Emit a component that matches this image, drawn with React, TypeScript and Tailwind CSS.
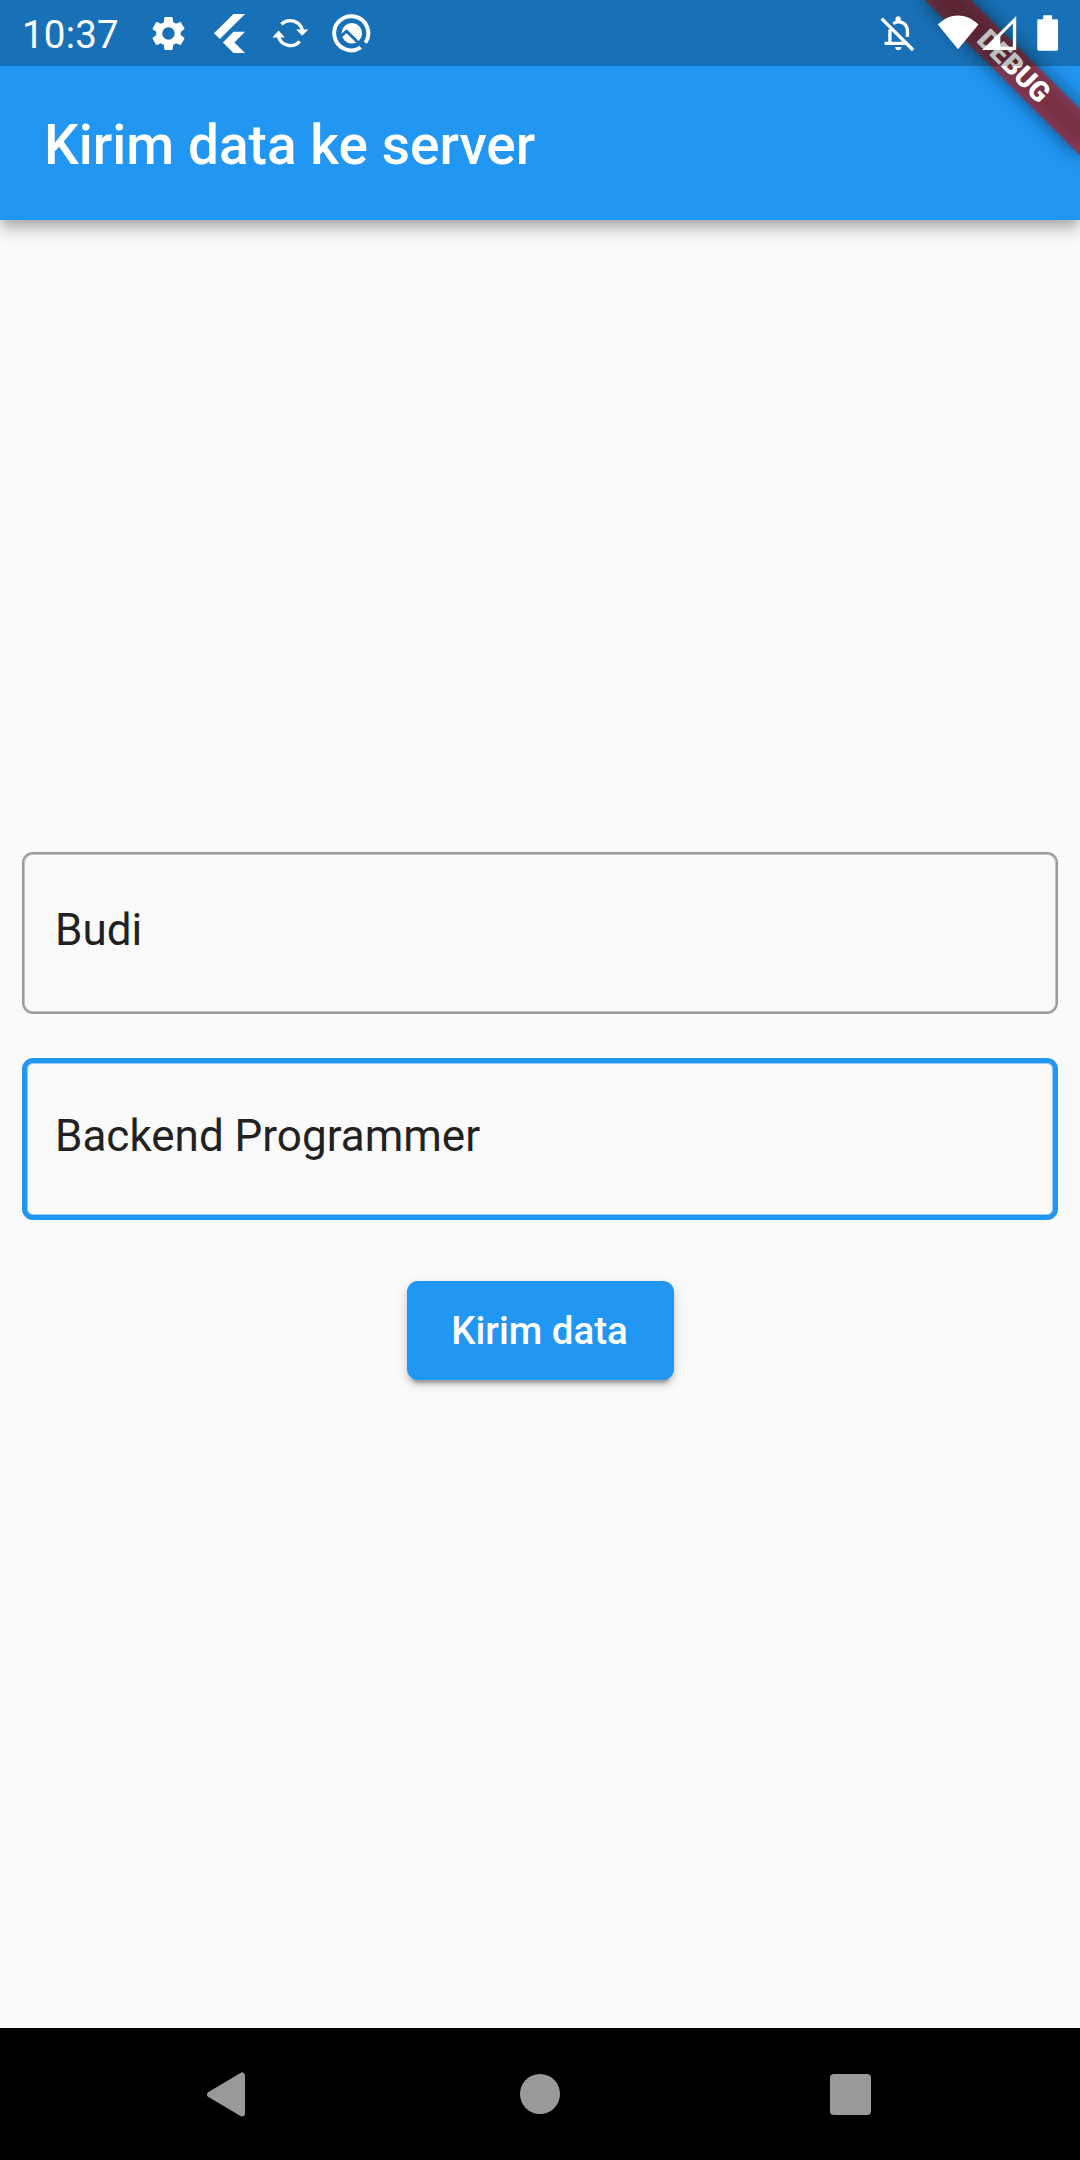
import { MdSettings } from "react-icons/md";

function Field({ value, focused }: { value: string; focused?: boolean }) {
  return (
    <div
      className={
        focused
          ? "flex h-[162px] items-center rounded-[11px] border-[5px] border-[#2196f3] pl-[28px] shadow-[inset_0_0_0_1px_rgba(33,150,243,0.45)]"
          : "flex h-[162px] items-center rounded-[11px] border-[2px] border-[#9b9b9b] pl-[31px] shadow-[inset_0_0_0_1px_rgba(155,155,155,0.6)]"
      }
    >
      <span className="-mt-[6px] text-[44px] leading-[52px] text-[#212121]">{value}</span>
    </div>
  );
}

function StatusBar() {
  return (
    <div className="relative z-20 flex h-[66px] items-center bg-black/25 text-white">
      <span className="w-[125px] pt-[3px] pl-[22px] text-[38.5px] leading-[44px] tracking-[0.2px]">10:37</span>
      <MdSettings className="ml-[23px] size-[41px]" />
      <svg className="ml-[20px] size-[41px]" viewBox="26 38 124 124" fill="currentColor">
        <path d="M100 41H135L59 117L41 99ZM100 95H135L103 127L135 159H100L68 127Z" />
      </svg>
      <svg className="ml-[20px] size-[41px]" viewBox="209 38 124 124" fill="currentColor">
        <path d="M243.500 72A38 38 0 0 1 307 90M234 107A38 38 0 0 0 299 124" fill="none" stroke="currentColor" strokeWidth="10" />
        <path d="M288 88H325L306.500 107ZM216 112H254L235 91Z" />
      </svg>
      <svg className="ml-[20px] size-[41px]" viewBox="392 38 124 124" fill="currentColor">
        <path d="M482 142A51.500 51.500 0 1 1 496 128" fill="none" stroke="currentColor" strokeWidth="12" />
        <circle cx="455" cy="99" r="31" />
        <path d="M422 108L439 93L488 141" fill="none" stroke="#1970b6" strokeWidth="9" />
      </svg>
      <svg className="ml-auto h-[41px] w-[41px]" viewBox="52 38 124 124" fill="none" stroke="currentColor" strokeWidth="10">
        <path d="M63 55L158 150M72 130H138M88 130V88M98 70C120 58 140 70 141 92V110" />
        <path d="M104 141H123A9 9 0 0 1 104 141ZM105 63V56A8 8 0 0 1 121 56V63Z" fill="currentColor" stroke="none" />
      </svg>
      <svg className="ml-[16px] h-[41px] w-[46px]" viewBox="226 38 138 124" fill="currentColor">
        <path d="M295 148L234 73C270 36 320 36 357 73Z" />
      </svg>
      <svg className="h-[41px] w-[38px]" viewBox="364 38 114 124" fill="currentColor">
        <path fillRule="evenodd" d="M367 150L470 47V150ZM422 140H460V70L422 108Z" />
      </svg>
      <svg className="mr-[16px] ml-[12px] h-[41px] w-[33px]" viewBox="512 38 100 124" fill="currentColor">
        <path d="M549 45H576V57H590Q594 57 594 61V148Q594 152 590 152H535Q531 152 531 148V61Q531 57 535 57H549Z" />
      </svg>
    </div>
  );
}

export default function App() {
  return (
    <div className="relative flex h-[2160px] w-[1080px] flex-col overflow-hidden bg-[#fafafa] font-['Roboto',sans-serif]">
      <header className="relative h-[220px] bg-[#2196f3] shadow-[0_5px_11px_-3px_rgba(0,0,0,0.2),0_11px_14px_0_rgba(0,0,0,0.14),0_3px_27px_0_rgba(0,0,0,0.12)]">
        <StatusBar />
        <h1 className="flex h-[154px] items-center pt-[3px] pl-[44px] text-[55px] leading-[64px] font-medium tracking-[0.02px] text-white">
          Kirim data ke server
        </h1>
        <div className="pointer-events-none absolute top-0 right-0 z-10 size-[220px] overflow-hidden">
          <div className="absolute top-[77px] left-[110px] h-[33px] w-[220px] origin-[110px_-77px] rotate-45">
            <div className="absolute inset-0 bg-black/50 blur-[10px]" />
            <div className="relative flex h-full items-center justify-center bg-[#b71c1c]/[0.627] text-[28px] leading-[28px] font-black text-white">
              DEBUG
            </div>
          </div>
        </div>
      </header>

      <main className="flex flex-1 flex-col justify-center px-[22px] pb-[16px]">
        <Field value="Budi" />
        <div className="mt-[44px]">
          <Field value="Backend Programmer" focused />
        </div>
        <button className="mt-[61px] flex h-[99px] w-[267px] items-center justify-center self-center rounded-[11px] bg-[#2196f3] pr-px text-[38.5px] font-medium text-white shadow-[0_8px_3px_-5px_rgba(0,0,0,0.2),0_5px_5px_0_rgba(0,0,0,0.14),0_3px_14px_0_rgba(0,0,0,0.12)]">
          Kirim data
        </button>
      </main>

      <nav className="flex h-[132px] items-center bg-black pl-[205px] text-[#999]">
        <svg className="h-[48px] w-[42px]" viewBox="0 0 42 48" fill="currentColor" stroke="currentColor" strokeWidth="6" strokeLinejoin="round">
          <path d="M5 24.500L37 5.500V43.500Z" />
        </svg>
        <div className="ml-[273px] size-[40px] rounded-full bg-[#999]" />
        <div className="mt-[1px] ml-[270px] size-[41px] rounded-[4px] bg-[#999]" />
      </nav>
    </div>
  );
}
